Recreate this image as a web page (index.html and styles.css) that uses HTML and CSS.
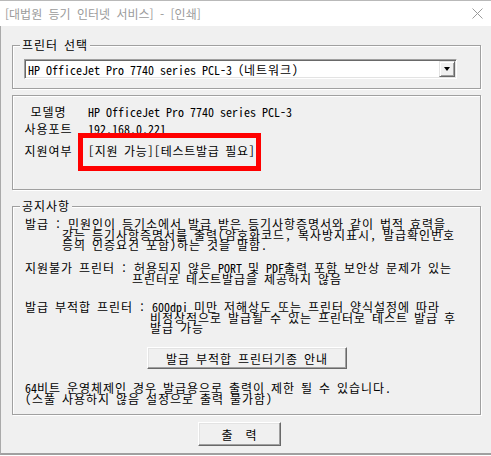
FILE: index.html
```html
<!DOCTYPE html>
<html lang="ko">
<head>
    <meta charset="UTF-8">
    <meta name="viewport" content="width=device-width, initial-scale=1.0">
    <title>[대법원 등기 인터넷 서비스] - [인쇄]</title>
    <link rel="stylesheet" href="styles.css">
</head>
<body>

    <div class="window">
        <!-- Title bar -->
        <div class="titlebar">
            <span class="title">[대법원 등기 인터넷 서비스] - [인쇄]</span>
            <svg class="close" width="11" height="11" viewBox="0 0 11 11">
                <path d="M0.5 0.5 L10.5 10.5 M10.5 0.5 L0.5 10.5" stroke="#9a9a9a" stroke-width="1" fill="none"/>
            </svg>
        </div>

        <div class="client">
            <!-- Printer select -->
            <fieldset class="group">
                <legend>프린터 선택</legend>
                <div class="printer-select">
                    <div class="combo">
                        <span class="combo-text"><span class="lat">HP OfficeJet Pro 7740 series PCL-3 (</span>네트워크<span class="lat">)</span></span>
                        <span class="combo-btn"><span class="arrow"></span></span>
                    </div>
                </div>
            </fieldset>

            <!-- Printer info -->
            <div class="group info">
                <div class="info-row">
                    <span class="info-label">모델명</span>
                    <span class="lat">HP OfficeJet Pro 7740 series PCL-3</span>
                </div>
                <div class="info-row">
                    <span class="info-label">사용포트</span>
                    <span class="lat">192.168.0.221</span>
                </div>
                <div class="info-row support">
                    <span class="info-label">지원여부</span>
                    <span class="support-value">[지원 가능][테스트발급 필요]</span>
                </div>
                <div class="highlight"></div>
            </div>

            <!-- Notice -->
            <fieldset class="group notice-group">
                <legend>공지사항</legend>
                <div class="notice">
                    <div class="para">
                        <div class="line">발급 : 민원인이 등기소에서 발급 받은 등기사항증명서와 같이 법적 효력을</div>
                        <div class="line indent-1">갖는 등기사항증명서를 출력(암호화코드, 복사방지표시, 발급확인번호</div>
                        <div class="line indent-1">등의 인증요건 포함)하는 것을 말함.</div>
                    </div>
                    <div class="para p2">
                        <div class="line">지원불가 프린터 : 허용되지 않은 <span class="lat">PORT</span> 및 <span class="lat">PDF</span>출력 포함 보안상 문제가 있는</div>
                        <div class="line indent-2">프린터로 테스트발급을 제공하지 않음</div>
                    </div>
                    <div class="para p3">
                        <div class="line">발급 부적합 프린터 : <span class="lat">600dpi</span> 미만 저해상도 또는 프린터 양식설정에 따라</div>
                        <div class="line indent-3">비정상적으로 발급될 수 있는 프린터로 테스트 발급 후</div>
                        <div class="line indent-3">발급 가능</div>
                    </div>
                    <button type="button" class="win-btn guide-btn">발급 부적합 프린터기종 안내</button>
                    <div class="para p4">
                        <div class="line"><span class="lat">64</span>비트 운영체제인 경우 발급용으로 출력이 제한 될 수 있습니다.</div>
                        <div class="line">(스풀 사용하지 않음 설정으로 출력 불가함)</div>
                    </div>
                </div>
            </fieldset>

            <div class="actions">
                <button type="button" class="win-btn print-btn">출&nbsp;&nbsp;력</button>
            </div>
        </div>
    </div>

</body>
</html>
```

FILE: styles.css
```css
/* General page styles */
body {
    margin: 0;
    background-color: #ffffff;
    font-family: "Noto Sans Mono CJK KR", "Noto Sans CJK KR", monospace;
    font-size: 12px;
    color: #000;
    /* hangul cells 12px wide, spaces 6px, like the dialog font */
    letter-spacing: 0.96px;
    word-spacing: -0.96px;
}

/* latin runs are already 6px per char */
.lat {
    letter-spacing: 0;
    word-spacing: 0;
}

.window {
    width: 491px;
}

/* Title bar */
.titlebar {
    height: 25px;
    border-top: 1px solid #b9b9b9;
    display: flex;
    align-items: center;
    justify-content: space-between;
    padding: 0 8px 0 5px;
    background-color: #ffffff;
}

.title {
    font-family: "Noto Sans CJK KR", sans-serif;
    color: #9b9b9b;
    letter-spacing: 0;
    word-spacing: 3px;
}

.close {
    display: block;
}

/* Dialog area */
.client {
    box-sizing: border-box;
    height: 429px;
    padding-top: 12px;
    background-color: #f0f0f0;
    border-left: 1px solid #aaaaaa;
    border-bottom: 2px solid #a0a0a0;
}

/* Etched group boxes */
.group {
    margin: 0 10px 0 11px;
    padding: 0;
    min-width: 0;
    border: 1px solid #a0a0a0;
    box-shadow: inset 1px 1px 0 #ffffff, 1px 1px 0 #ffffff;
}

.group legend {
    margin-left: 7px;
    padding: 0 2px;
    line-height: 14px;
    background-color: #f0f0f0;
}

.printer-select {
    padding: 7px 11px 9px 11px;
}

/* Combo box */
.combo {
    box-sizing: border-box;
    width: 433px;
    height: 20px;
    display: flex;
    align-items: center;
    padding: 1px 1px 1px 3px;
    background-color: #ffffff;
    border: 1px solid;
    border-color: #a0a0a0 #ffffff #ffffff #a0a0a0;
    box-shadow: inset 1px 1px 0 #696969, inset -1px -1px 0 #e3e3e3;
}

.combo-text {
    flex: 1;
    white-space: nowrap;
}

.combo-btn {
    box-sizing: border-box;
    width: 16px;
    height: 16px;
    display: flex;
    align-items: center;
    justify-content: center;
    background-color: #f0f0f0;
    border: 1px solid;
    border-color: #e3e3e3 #696969 #696969 #e3e3e3;
    box-shadow: inset 1px 1px 0 #ffffff, inset -1px -1px 0 #a0a0a0;
}

.arrow {
    width: 0;
    height: 0;
    border-top: 4px solid #000;
    border-left: 3.5px solid transparent;
    border-right: 3.5px solid transparent;
}

/* Printer info */
.info {
    position: relative;
    box-sizing: border-box;
    height: 95px;
    margin-top: 6px;
    padding: 7px 0 0 11px;
}

.info-row {
    display: grid;
    grid-template-columns: 49px auto;
    column-gap: 15px;
    height: 17px;
    line-height: 17px;
    white-space: nowrap;
}

.info-label {
    text-align: center;
}

.info-row.support {
    margin-top: 5px;
}

.support-value {
    letter-spacing: 0.7px;
}

/* red marker drawn over the support status */
.highlight {
    position: absolute;
    left: 65px;
    top: 37px;
    width: 183px;
    height: 38px;
    box-sizing: border-box;
    border: 5px solid #ff0000;
}

/* Notice */
.notice-group {
    margin-top: 9px;
}

.notice {
    padding: 6px 0 10px 12px;
}

.line {
    line-height: 10.5px;
    white-space: nowrap;
}

.indent-1 {
    margin-left: 37px;
}

.indent-2 {
    margin-left: 107px;
}

.indent-3 {
    margin-left: 125px;
}

.p2 {
    margin-top: 12.5px;
}

.p3 {
    margin-top: 18px;
}

.p4 {
    margin-top: 14px;
}

/* Classic buttons */
.win-btn {
    display: block;
    box-sizing: border-box;
    padding: 0;
    font: inherit;
    letter-spacing: inherit;
    word-spacing: inherit;
    color: #000;
    background-color: #f0f0f0;
    border: 1px solid;
    border-color: #ffffff #696969 #696969 #ffffff;
    box-shadow: inset -1px -1px 0 #a0a0a0, inset 1px 1px 0 #e3e3e3;
}

.guide-btn {
    width: 200px;
    height: 22px;
    margin: 13.5px 0 0 122px;
}

.actions {
    padding: 7px 0 0 197px;
}

.print-btn {
    width: 83px;
    height: 24px;
}
```
